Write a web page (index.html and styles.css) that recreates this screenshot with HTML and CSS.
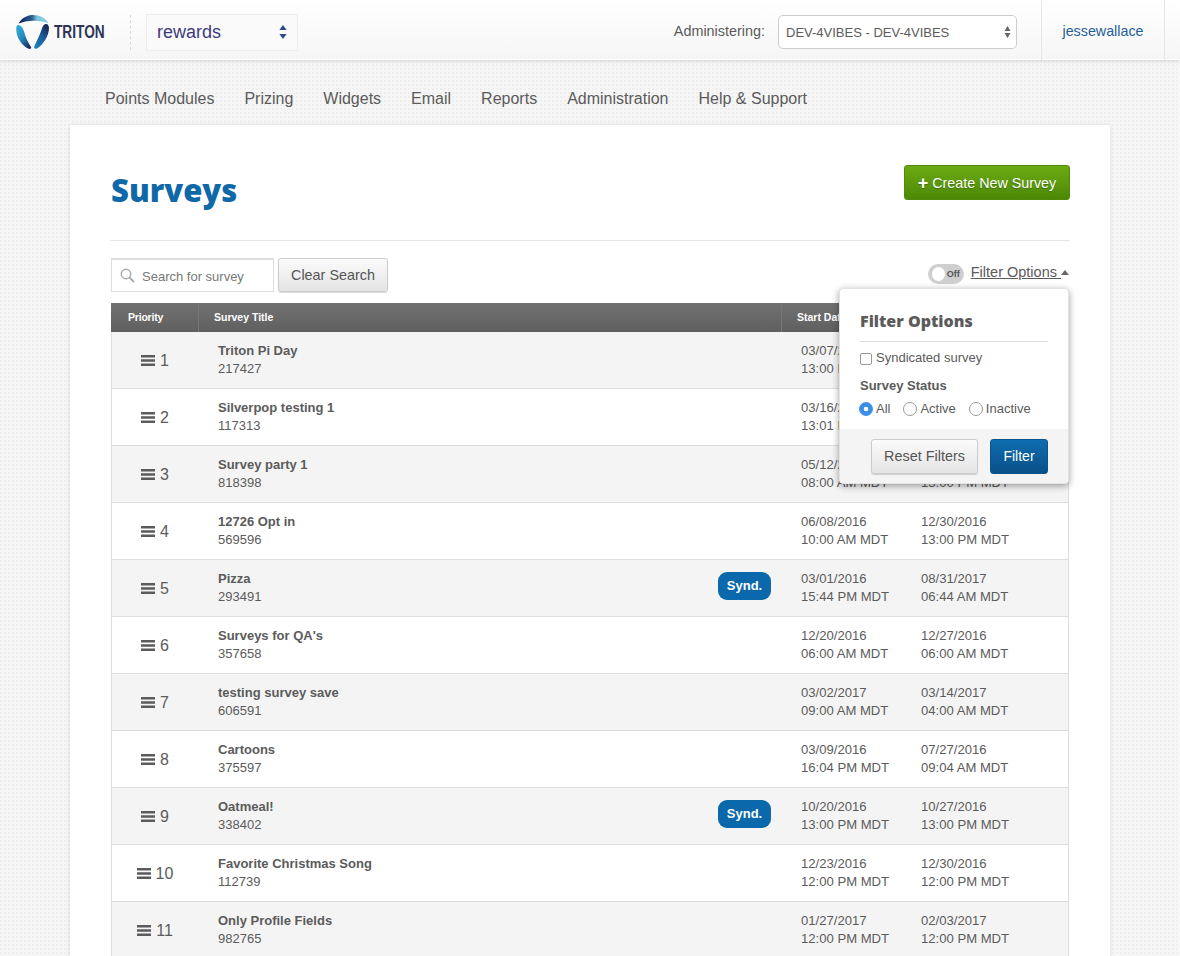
FILE: index.html
```html
<!DOCTYPE html>
<html lang="en">
<head>
<meta charset="utf-8">
<title>Surveys</title>
<link rel="stylesheet" href="styles.css">
</head>
<body>
<svg class="defs" width="0" height="0" aria-hidden="true"><defs>
  <symbol id="bars" viewBox="0 0 14 11"><path d="M0 0h14v2.400H0zM0 4.300h14v2.400H0zM0 8.600h14V11H0z"/></symbol>
  <linearGradient id="lgTop" x1="0" x2="1" y1="0" y2="0"><stop offset=".1" stop-color="#1b2a5e"/><stop offset=".45" stop-color="#2a5f92"/><stop offset=".62" stop-color="#7cc6de"/><stop offset="1" stop-color="#8fd0e4"/></linearGradient>
  <linearGradient id="lgLeft" x1="0" x2=".7" y1="0" y2="1"><stop offset="0" stop-color="#35b0df"/><stop offset=".55" stop-color="#2388bd"/><stop offset="1" stop-color="#1b2f63"/></linearGradient>
  <linearGradient id="lgRight" x1=".8" x2=".2" y1="0" y2="1"><stop offset=".1" stop-color="#1b2a5e"/><stop offset=".5" stop-color="#1b5f9a"/><stop offset="1" stop-color="#1f7dbb"/></linearGradient>
</defs></svg>
<header class="topbar">
  <div class="logo">
    <svg class="logo-mark" width="34" height="35" viewBox="0 0 34 35">
      <path d="M2.500 8.500C6 1.500 14 0 17 0C24 0 30 3 32.500 8.500C28 6.500 22 5.500 17 5.800C12 6 7 7 2.500 8.500Z" fill="url(#lgTop)"/>
      <path d="M.3 15C0 11 1 10 2.500 10C6 11 7.500 14 8.500 18C10 24 12.500 28 15 32C16 33.500 14 34.500 12 33.500C5 30 .5 22 .3 15Z" fill="url(#lgLeft)"/>
      <path d="M28.500 9.500C31 8 33 10 33 13C33 21 27 30 21 33.500C19 34.500 17.500 33 18.500 31C21 26 23.500 20 25.500 15C26 12.500 27 10.500 28.500 9.500Z" fill="url(#lgRight)"/>
    </svg>
    <span class="logo-text">TRITON</span>
  </div>
  <div class="app-select">
    <span>rewards</span>
    <svg width="8" height="14" viewBox="0 0 8 14"><path d="M4 0l3.600 5H.4zM4 14L.4 9h7.200z" fill="#2c4a8a"/></svg>
  </div>
  <div class="admin">
    <span class="admin-label">Administering:</span>
    <div class="admin-select">
      <span>DEV-4VIBES - DEV-4VIBES</span>
      <svg width="7" height="12" viewBox="0 0 7 12"><path d="M3.500 0l3 5H.5zM3.500 12l-3-5h6z" fill="#666"/></svg>
    </div>
  </div>
  <a class="user" href="#">jessewallace</a>
</header>

<nav class="mainnav">
  <a href="#">Points Modules</a>
  <a href="#">Prizing</a>
  <a href="#">Widgets</a>
  <a href="#">Email</a>
  <a href="#">Reports</a>
  <a href="#">Administration</a>
  <a href="#">Help &amp; Support</a>
</nav>

<main class="card">
  <div class="title-row">
    <h1>Surveys</h1>
    <a class="btn-create" href="#"><b>+</b> Create New Survey</a>
  </div>
  <div class="toolbar">
    <div class="search">
      <svg width="15" height="15" viewBox="0 0 15 15"><circle cx="6" cy="6" r="4.700" fill="none" stroke="#aaa" stroke-width="1.500"/><path d="M9.500 9.500L14 14" stroke="#aaa" stroke-width="1.800"/></svg>
      <span>Search for survey</span>
    </div>
    <button class="btn">Clear Search</button>
    <div class="filter-toggle">
      <span class="switch"><i></i><em>Off</em></span>
      <a href="#">Filter Options </a>
      <span class="caret"></span>
    </div>
    <section class="popover">
      <div class="pop-body">
        <h2>Filter Options</h2>
        <label class="check"><input type="checkbox"> Syndicated survey</label>
        <div class="status-title">Survey Status</div>
        <div class="radios">
          <label><input type="radio" name="status" checked> All</label>
          <label><input type="radio" name="status"> Active</label>
          <label><input type="radio" name="status"> Inactive</label>
        </div>
      </div>
      <div class="pop-foot">
        <button class="btn">Reset Filters</button>
        <button class="btn-primary">Filter</button>
      </div>
    </section>
  </div>

  <div class="table">
    <div class="thead">
      <div class="th-pri">Priority</div>
      <div class="th-title">Survey Title</div>
      <div class="th-start">Start Date</div>
      <div>End Date</div>
    </div>
    <div class="row">
      <div class="pri"><svg><use href="#bars"/></svg>1</div>
      <div class="name"><b>Triton Pi Day</b><span>217427</span></div>
      <div class="date">03/07/2016<br>13:00 PM MDT</div>
      <div class="date">03/14/2017<br>13:00 PM MDT</div>
    </div>
    <div class="row">
      <div class="pri"><svg><use href="#bars"/></svg>2</div>
      <div class="name"><b>Silverpop testing 1</b><span>117313</span></div>
      <div class="date">03/16/2016<br>13:01 PM MDT</div>
      <div class="date">03/31/2017<br>13:00 PM MDT</div>
    </div>
    <div class="row">
      <div class="pri"><svg><use href="#bars"/></svg>3</div>
      <div class="name"><b>Survey party 1</b><span>818398</span></div>
      <div class="date">05/12/2016<br>08:00 AM MDT</div>
      <div class="date">05/31/2017<br>13:00 PM MDT</div>
    </div>
    <div class="row">
      <div class="pri"><svg><use href="#bars"/></svg>4</div>
      <div class="name"><b>12726 Opt in</b><span>569596</span></div>
      <div class="date">06/08/2016<br>10:00 AM MDT</div>
      <div class="date">12/30/2016<br>13:00 PM MDT</div>
    </div>
    <div class="row">
      <div class="pri"><svg><use href="#bars"/></svg>5</div>
      <div class="name"><b>Pizza</b><span>293491</span><i class="badge">Synd.</i></div>
      <div class="date">03/01/2016<br>15:44 PM MDT</div>
      <div class="date">08/31/2017<br>06:44 AM MDT</div>
    </div>
    <div class="row">
      <div class="pri"><svg><use href="#bars"/></svg>6</div>
      <div class="name"><b>Surveys for QA's</b><span>357658</span></div>
      <div class="date">12/20/2016<br>06:00 AM MDT</div>
      <div class="date">12/27/2016<br>06:00 AM MDT</div>
    </div>
    <div class="row">
      <div class="pri"><svg><use href="#bars"/></svg>7</div>
      <div class="name"><b>testing survey save</b><span>606591</span></div>
      <div class="date">03/02/2017<br>09:00 AM MDT</div>
      <div class="date">03/14/2017<br>04:00 AM MDT</div>
    </div>
    <div class="row">
      <div class="pri"><svg><use href="#bars"/></svg>8</div>
      <div class="name"><b>Cartoons</b><span>375597</span></div>
      <div class="date">03/09/2016<br>16:04 PM MDT</div>
      <div class="date">07/27/2016<br>09:04 AM MDT</div>
    </div>
    <div class="row">
      <div class="pri"><svg><use href="#bars"/></svg>9</div>
      <div class="name"><b>Oatmeal!</b><span>338402</span><i class="badge">Synd.</i></div>
      <div class="date">10/20/2016<br>13:00 PM MDT</div>
      <div class="date">10/27/2016<br>13:00 PM MDT</div>
    </div>
    <div class="row">
      <div class="pri"><svg><use href="#bars"/></svg>10</div>
      <div class="name"><b>Favorite Christmas Song</b><span>112739</span></div>
      <div class="date">12/23/2016<br>12:00 PM MDT</div>
      <div class="date">12/30/2016<br>12:00 PM MDT</div>
    </div>
    <div class="row">
      <div class="pri"><svg><use href="#bars"/></svg>11</div>
      <div class="name"><b>Only Profile Fields</b><span>982765</span></div>
      <div class="date">01/27/2017<br>12:00 PM MDT</div>
      <div class="date">02/03/2017<br>12:00 PM MDT</div>
    </div>
  </div>
</main>
</body>
</html>
```

FILE: styles.css
```css
* { box-sizing: border-box; }
html, body { height: 956px; overflow: hidden; }
body {
  margin: 0;
  font-family: "Liberation Sans", Arial, sans-serif;
  color: #5b5b5b;
  background-color: #f6f6f6;
  background-image: radial-gradient(circle at 1px 1px, #eeeeee 1px, transparent 1.200px);
  background-size: 4px 4px;
}
a { color: inherit; text-decoration: none; }
.defs { position: absolute; }

.topbar {
  height: 60px;
  display: flex;
  align-items: center;
  padding: 5px 0 0 15px;
  background: linear-gradient(#ffffff, #f6f6f6);
  border-bottom: 1px solid #fff;
  box-shadow: 0 1px 4px rgba(0,0,0,.13);
}
.logo {
  width: 116px;
  height: 35px;
  display: flex;
  align-items: center;
  gap: 4px;
  border-right: 1px dashed #d8d8d8;
}
.logo-mark { flex: none; margin-left: 1px; }
.logo-text {
  font-weight: 700;
  font-size: 19px;
  color: #2d3458;
  transform: scaleX(.72);
  transform-origin: left center;
}
.app-select {
  margin-left: 15px;
  width: 152px;
  height: 37px;
  display: flex;
  align-items: center;
  justify-content: space-between;
  padding: 0 10px;
  background: #fafafa;
  border: 1px solid #ededed;
  font-size: 18px;
  color: #3d3a80;
}
.admin {
  margin-left: auto;
  display: flex;
  align-items: center;
  gap: 13px;
}
.admin-label { font-size: 14.400px; padding-bottom: 2px; }
.admin-select {
  width: 239px;
  height: 34px;
  display: flex;
  align-items: center;
  justify-content: space-between;
  padding: 0 5px 0 7px;
  background: #fff;
  border: 1px solid #ccc;
  border-radius: 5px;
  font-size: 13px;
}
.user {
  align-self: flex-start;
  margin: -5px 15px 0 24px;
  width: 124px;
  height: 60px;
  display: flex;
  align-items: center;
  justify-content: center;
  padding-top: 2px;
  border-left: 1px solid #e6e6e6;
  border-right: 1px solid #e6e6e6;
  font-size: 14.300px;
  color: #1f5f99;
}

.mainnav {
  height: 65px;
  display: flex;
  gap: 30px;
  padding: 30px 0 0 105px;
  font-size: 16px;
  line-height: 18px;
}

.card {
  width: 1040px;
  height: 900px;
  margin: 0 auto;
  padding: 40px;
  background: #fff;
  box-shadow: 0 0 4px rgba(0,0,0,.1);
}
.title-row {
  height: 76px;
  display: flex;
  justify-content: space-between;
  align-items: flex-start;
  border-bottom: 1px solid #e6e6e6;
}
h1 {
  margin: 5px 0 0 1px;
  font-family: "Open Sans", sans-serif;
  font-weight: 800;
  font-size: 31px;
  line-height: 40px;
  color: #0f68a8;
}
.btn-create {
  width: 166px;
  height: 35px;
  display: flex;
  align-items: center;
  justify-content: center;
  background: linear-gradient(#6cab12, #4c8806);
  border: 1px solid #4f8a0a;
  border-radius: 3px;
  color: #fff;
  font-size: 14.300px;
  text-shadow: 0 1px 1px rgba(0,0,0,.25);
  white-space: pre;
}
.btn-create b { font-size: 18px; line-height: 18px; }

.toolbar {
  position: relative;
  display: flex;
  align-items: flex-start;
  gap: 4px;
  margin: 17px 1px 11px;
  height: 34px;
}
.search {
  width: 163px;
  height: 34px;
  display: flex;
  align-items: center;
  gap: 7px;
  padding-left: 8px;
  border: 1px solid #ddd;
  border-top-width: 2px;
  font-size: 13px;
  color: #777;
}
.search span { padding-top: 1px; }
.btn {
  height: 34px;
  padding: 0 12px;
  background: linear-gradient(#fbfbfb, #e4e4e4);
  border: 1px solid #ccc;
  border-radius: 3px;
  box-shadow: 0 1px 1px rgba(0,0,0,.15);
  font: 14.400px "Liberation Sans", sans-serif;
  color: #555;
}
.filter-toggle {
  margin: 6px 0 0 auto;
  height: 20px;
  display: flex;
  align-items: center;
  font-size: 14.500px;
}
.filter-toggle a { margin: 0 0 4px 7px; text-decoration: underline; white-space: pre; }
.switch {
  width: 36px;
  height: 20px;
  display: flex;
  align-items: center;
  padding: 0 4px;
  gap: 2px;
  background: #cfcfcf;
  border-radius: 10px;
}
.switch i { width: 14px; height: 14px; border-radius: 50%; background: #fff; }
.switch em { font: 700 9px "Liberation Sans", sans-serif; color: #555; }
.caret {
  width: 0;
  height: 0;
  margin-bottom: 4px;
  border: 4.500px solid transparent;
  border-top: 0;
  border-bottom: 5px solid #666;
}

.popover {
  position: absolute;
  top: 30px;
  right: 0;
  z-index: 2;
  width: 230px;
  height: 196px;
  background: #fff;
  border: 1px solid #e2e2e2;
  border-radius: 4px;
  box-shadow: 0 2px 7px rgba(0,0,0,.38);
  font-size: 13px;
}
.pop-body { height: 140px; padding: 20px 20px 0; }
h2 {
  margin: 0;
  height: 33px;
  border-bottom: 1px solid #ddd;
  font-family: "Open Sans", sans-serif;
  font-size: 16px;
  line-height: 24px;
  font-weight: 800;
  color: #5b5b5b;
}
.check { display: flex; align-items: center; gap: 4px; margin-top: 6px; height: 18px; }
.status-title { margin-top: 12px; font-weight: 700; line-height: 16px; }
.radios { display: flex; gap: 13px; margin: 7px 0 0 -1px; }
.radios label { display: flex; align-items: center; gap: 3px; }
input { appearance: none; margin: 0; background: #fff; border: 1px solid #999; flex: none; }
input[type=checkbox] { width: 12px; height: 12px; border-radius: 2px; margin-top: 3px; }
input[type=radio] { width: 14px; height: 14px; border-radius: 50%; }
input[type=radio]:checked {
  border-color: #3b8fe8;
  background: radial-gradient(circle, #fff 2px, #3b8fe8 2.600px);
}
.pop-foot {
  height: 54px;
  display: flex;
  justify-content: flex-end;
  align-items: center;
  gap: 12px;
  padding-right: 20px;
  background: #f4f4f4;
  border-radius: 0 0 4px 4px;
}
.pop-foot .btn { width: 107px; height: 35px; }
.btn-primary {
  width: 58px;
  height: 35px;
  background: linear-gradient(#0f6cb0, #0a5088);
  border: 1px solid #0a558f;
  border-radius: 3px;
  color: #fff;
  font: 14px "Liberation Sans", sans-serif;
}

.table { margin: 0 1px; border-left: 1px solid #ddd; border-right: 1px solid #ddd; }
.thead {
  display: grid;
  grid-template-columns: 87px 583px 120px 1fr;
  height: 29px;
  margin: 0 -1px;
  align-items: center;
  background: linear-gradient(#727272, #5f5f5f);
  color: #fff;
  font-size: 10.500px;
  font-weight: 700;
}
.thead > div { height: 100%; display: flex; align-items: center; padding-bottom: 2px; }
.th-pri { padding-left: 17px; letter-spacing: -.2px; }
.th-title { padding-left: 15px; border-left: 1px solid #777; }
.th-start { padding-left: 15px; border-left: 1px solid #777; }
.row {
  display: grid;
  grid-template-columns: 86px 583px 120px 1fr;
  height: 57px;
  border-bottom: 1px solid #ddd;
  font-size: 13px;
  line-height: 18px;
}
.row:nth-child(even) { background: #f4f4f4; }
.pri {
  display: flex;
  align-items: center;
  justify-content: center;
  gap: 5px;
  padding-top: 2px;
  font-size: 16px;
}
.pri svg { width: 14px; height: 11px; margin-bottom: 2px; fill: #5b5b5b; }
.name {
  position: relative;
  padding: 10px 0 0 20px;
  display: flex;
  flex-direction: column;
}
.badge {
  position: absolute;
  top: 12px;
  right: 10px;
  width: 53px;
  height: 28px;
  display: flex;
  align-items: center;
  justify-content: center;
  background: #0a68ab;
  border-radius: 9px;
  color: #fff;
  font-style: normal;
  font-weight: 700;
  font-size: 13px;
}
.date { padding: 10px 0 0 20px; font-size: 13.100px; }
```
